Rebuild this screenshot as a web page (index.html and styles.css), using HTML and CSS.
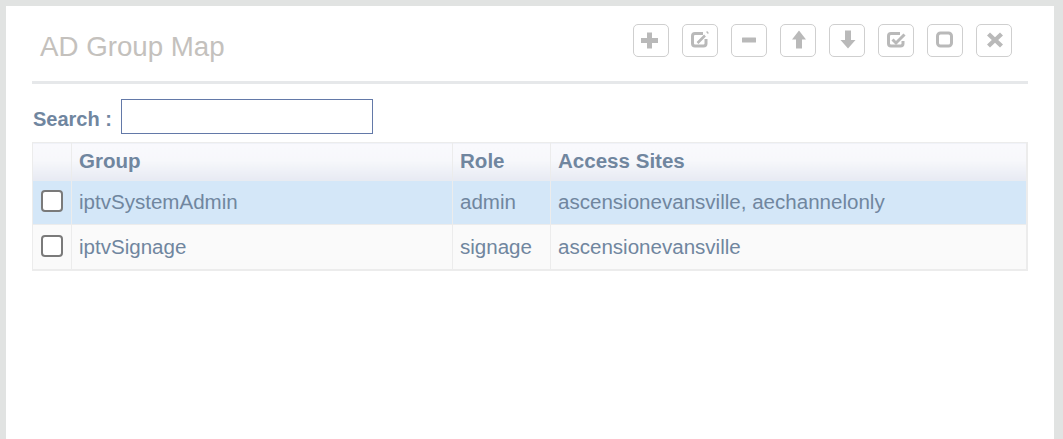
FILE: index.html
```html
<!DOCTYPE html>
<html lang="en">

<head>
    <meta charset="UTF-8">
    <meta name="viewport" content="width=device-width, initial-scale=1.0">
    <title>AD Group Map</title>
    <link rel="stylesheet" href="styles.css">
</head>

<body>
    <div class="panel">
        <div class="panel-head">
            <h1>AD Group Map</h1>
            <div class="toolbar">
                <button type="button" class="tool-btn" title="Add">
                    <svg viewBox="0 0 20 20"><path d="M6 2.500h5V8h6v5h-6v5.500H6V13H0V8h6z" /></svg>
                </button>
                <button type="button" class="tool-btn" title="Edit">
                    <svg viewBox="0 0 20 20">
                        <path class="line" d="M13 3.500H5A2.500 2.500 0 0 0 2.500 6v7.500A2.500 2.500 0 0 0 5 16h8.500a2.500 2.500 0 0 0 2.500-2.500V9" />
                        <path class="pen" d="M7.500 13L15 5.500M17 3l1-1" />
                    </svg>
                </button>
                <button type="button" class="tool-btn" title="Remove">
                    <svg viewBox="0 0 20 20"><rect x="3" y="7.500" width="14" height="5" rx=".5" /></svg>
                </button>
                <button type="button" class="tool-btn" title="Move up">
                    <svg viewBox="0 0 20 20"><path d="M11 .5l7 9h-4v9H8v-9H4z" /></svg>
                </button>
                <button type="button" class="tool-btn" title="Move down">
                    <svg viewBox="0 0 20 20"><path d="M11 18.500l7.500-8.500H14V.5H8V10H3.500z" /></svg>
                </button>
                <button type="button" class="tool-btn" title="Select all">
                    <svg viewBox="0 0 20 20">
                        <path class="line" d="M14 3.500H5A2.500 2.500 0 0 0 2.500 6v7.500A2.500 2.500 0 0 0 5 16h9.500a2.500 2.500 0 0 0 2.500-2.500V11" />
                        <path class="line" d="M6.500 9.500l3.500 3.500 8.500-8.500" />
                    </svg>
                </button>
                <button type="button" class="tool-btn" title="Select none">
                    <svg viewBox="0 0 20 20"><rect class="line" x="2.500" y="3" width="14" height="13" rx="3" /></svg>
                </button>
                <button type="button" class="tool-btn" title="Close">
                    <svg viewBox="0 0 20 20"><path d="M6 2.500l5 4.700 5-4.700 3 3-4.800 4.500 4.800 4.500-3 3-5-4.700-5 4.700-3-3L7.800 10 3 5.500z" /></svg>
                </button>
            </div>
        </div>

        <div class="search-row">
            <label for="search">Search :</label>
            <input type="text" id="search">
        </div>

        <table class="grid">
            <colgroup>
                <col class="col-check">
                <col class="col-group">
                <col class="col-role">
                <col>
            </colgroup>
            <thead>
                <tr>
                    <th></th>
                    <th>Group</th>
                    <th>Role</th>
                    <th>Access Sites</th>
                </tr>
            </thead>
            <tbody>
                <tr class="row-selected">
                    <td><span class="check"></span></td>
                    <td>iptvSystemAdmin</td>
                    <td>admin</td>
                    <td>ascensionevansville, aechannelonly</td>
                </tr>
                <tr class="row-last">
                    <td><span class="check"></span></td>
                    <td>iptvSignage</td>
                    <td>signage</td>
                    <td>ascensionevansville</td>
                </tr>
            </tbody>
        </table>
    </div>
</body>

</html>
```

FILE: styles.css
```css
html,
body {
    height: 100%;
}

body {
    margin: 0;
    overflow: hidden;
    background-color: #e1e3e2;
    font-family: "Liberation Sans", Arial, sans-serif;
}

.panel {
    box-sizing: border-box;
    height: calc(100% - 6px);
    margin: 6px 9px 0 6px;
    padding: 0 26px;
    background-color: #fff;
}

.panel-head {
    display: flex;
    justify-content: space-between;
    height: 75px;
    border-bottom: 3px solid #e6e8ea;
}

.panel-head h1 {
    margin: 24px 0 0 8px;
    font-size: 27.7px;
    line-height: 33px;
    font-weight: normal;
    color: #c4c1bd;
}

.toolbar {
    display: flex;
    gap: 13px;
    margin: 18px 16px 0 0;
}

.tool-btn {
    display: flex;
    align-items: center;
    justify-content: center;
    box-sizing: border-box;
    width: 36px;
    height: 33px;
    padding: 0;
    background-color: #fff;
    border: 1px solid #cfcfcf;
    border-radius: 5px;
}

.tool-btn svg {
    overflow: visible;
    width: 20px;
    height: 20px;
    margin-bottom: 2px;
    fill: #b9b9b9;
}

.tool-btn .line,
.tool-btn .pen {
    fill: none;
    stroke: #b9b9b9;
    stroke-width: 3;
}

.tool-btn .pen {
    stroke-width: 2.5;
}

.search-row {
    display: flex;
    align-items: center;
    gap: 9px;
    height: 35px;
    margin-top: 15px;
    margin-bottom: 8px;
}

.search-row label {
    padding: 5px 0 0 1px;
    font-size: 20px;
    font-weight: bold;
    color: #70869f;
}

.search-row input {
    box-sizing: border-box;
    width: 252px;
    height: 35px;
    padding: 0 4px;
    border: 1px solid #6379a8;
    outline: none;
}

.grid {
    box-sizing: border-box;
    width: 996px;
    table-layout: fixed;
    border-collapse: collapse;
    border: 1px solid #ececec;
    border-right-width: 2px;
    border-bottom-width: 2px;
    font-size: 20.55px;
    color: #70869f;
}

.col-check {
    width: 39px;
}

.col-group {
    width: 381px;
}

.col-role {
    width: 98px;
}

.grid th,
.grid td {
    padding: 0 7px;
    text-align: left;
    border-right: 1px solid #ececec;
}

.grid th {
    height: 35px;
    padding-bottom: 2px;
    border-bottom: 1px solid #e8ebf1;
    background: linear-gradient(#f9f9fd, #f7f8fb 45%, #e7eaf3);
    font-weight: bold;
}

.grid td {
    height: 43px;
    background-color: #fafafa;
}

.row-selected td {
    height: 41px;
    padding-bottom: 2px;
    background-color: #d4e7f8;
    border-bottom: 1px solid #ececec;
}

.row-last td {
    height: 44px;
}

.check {
    display: block;
    box-sizing: border-box;
    width: 22px;
    height: 22px;
    margin: -2px 0 0 1px;
    background-color: #fff;
    border: 2px solid #7a7a7a;
    border-radius: 4px;
}
```
